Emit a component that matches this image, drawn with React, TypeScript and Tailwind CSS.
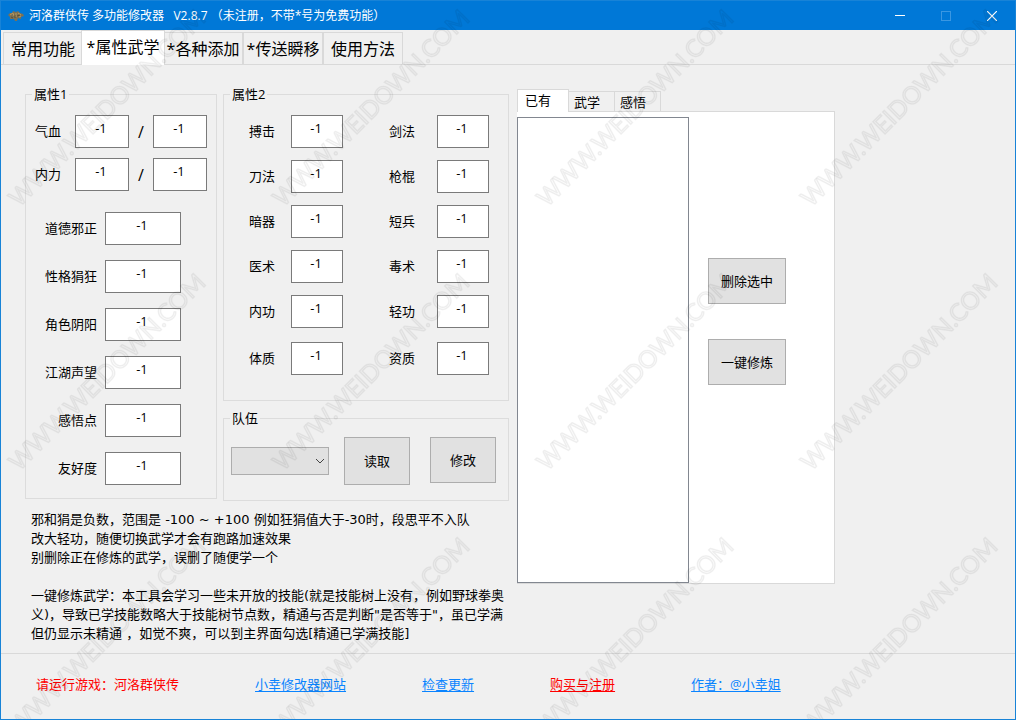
import { useState } from 'react';
import type { ReactNode } from 'react';

const mainTabs = ['常用功能', '*属性武学', '*各种添加', '*传送瞬移', '使用方法'];
const skillTabs = ['已有', '武学', '感悟'];

const traits = ['道德邪正', '性格狷狂', '角色阴阳', '江湖声望', '感悟点', '友好度'];

const skills = [
  ['搏击', '剑法'],
  ['刀法', '枪棍'],
  ['暗器', '短兵'],
  ['医术', '毒术'],
  ['内功', '轻功'],
  ['体质', '资质'],
];

const notes = [
  '邪和狷是负数，范围是 -100 ~ +100 例如狂狷值大于-30时，段思平不入队',
  '改大轻功，随便切换武学才会有跑路加速效果',
  '别删除正在修炼的武学，误删了随便学一个',
  '',
  '一键修炼武学：本工具会学习一些未开放的技能(就是技能树上没有，例如野球拳奥',
  '义)，导致已学技能数略大于技能树节点数，精通与否是判断"是否等于"，虽已学满',
  '但仍显示未精通 ，如觉不爽，可以到主界面勾选[精通已学满技能]',
];

const links = [
  { text: '小幸修改器网站', color: 'text-[#0a84ff]' },
  { text: '检查更新', color: 'text-[#0a84ff]' },
  { text: '购买与注册', color: 'text-[#ff0000]' },
  { text: '作者：@小幸姐', color: 'text-[#0a84ff]' },
];

const AppIcon = () => (
  <svg viewBox="0 0 16 12" className="h-3 w-4" aria-hidden="true">
    <path
      d="M0 5 L2 3 L4 3 L5 1 L8 2 L10 1 L12 3 L15 4 L16 6 L13 7 L13 9 L10 8 L9 11 L7 11 L6 9 L2 9 L2 7 Z"
      fill="#7d7154"
    />
    <path d="M2 5 L5 3 L6 6 M8 3 L8 7 M10 3 L13 5 M11 7 L13 6" stroke="#b99a5f" fill="none" />
    <path d="M3 7 L5 8 M7 5 L7 8 M9 6 L12 5" stroke="#4a3f2a" strokeWidth="0.7" fill="none" />
  </svg>
);

const TitleBar = () => (
  <header className="flex h-[29px] items-center bg-[#0078d7] pl-[7px] text-white">
    <AppIcon />
    <h1 className="ml-[5px] flex-1 whitespace-pre text-xs">
      {'河洛群侠传 多功能修改器   V2.8.7 （未注册，不带*号为免费功能）'}
    </h1>
    <button type="button" aria-label="最小化" className="flex h-full w-[46px] items-center justify-center">
      <svg viewBox="0 0 10 10" className="size-2.5">
        <path d="M0 4.5 H10" stroke="white" />
      </svg>
    </button>
    <button
      type="button"
      aria-label="最大化"
      disabled
      className="flex h-full w-[46px] items-center justify-center"
    >
      <svg viewBox="0 0 10 10" className="size-2.5">
        <rect x="0.5" y="0.5" width="9" height="9" fill="none" stroke="#3a97e2" />
      </svg>
    </button>
    <button type="button" aria-label="关闭" className="flex h-full w-[46px] items-center justify-center">
      <svg viewBox="0 0 10 10" className="size-2.5">
        <path d="M0 0 L10 10 M10 0 L0 10" stroke="white" strokeWidth="1.2" />
      </svg>
    </button>
  </header>
);

const MainTabs = () => {
  const [active, setActive] = useState(1);

  return (
    <nav className="flex h-[35px] items-end border-b border-[#d9d9d9] pl-0.5">
      {mainTabs.map((tab, index) => (
        <button
          key={tab}
          type="button"
          onClick={() => setActive(index)}
          className={`shrink-0 whitespace-nowrap text-base leading-6 ${
            index === active
              ? 'z-10 -mx-0.5 -mb-px h-[35px] w-[84px] border border-b-0 border-[#d9d9d9] bg-white pb-0.5'
              : 'h-8 w-20 border border-b-0 border-[#d9d9d9] bg-[#f0f0f0]'
          }`}
        >
          {tab}
        </button>
      ))}
    </nav>
  );
};

const Group = ({ title, children }: { title: string; children: ReactNode }) => (
  <fieldset className="border border-[#dcdcdc]">
    <legend className="ml-1.5 px-0.5 leading-[18px]">{title}</legend>
    {children}
  </fieldset>
);

const NumberBox = ({ id, label, width }: { id?: string; label?: string; width: string }) => (
  <input
    id={id}
    aria-label={label}
    type="text"
    defaultValue="-1"
    className={`h-[33px] ${width} border border-[#7a7a7a] bg-white pr-0.5 pb-2 text-center outline-none`}
  />
);

const Button = ({ size, children }: { size: string; children: ReactNode }) => (
  <button type="button" className={`border border-[#adadad] bg-[#e1e1e1] ${size}`}>
    {children}
  </button>
);

const PairRow = ({ id, label }: { id: string; label: string }) => (
  <div className="flex items-center">
    <label htmlFor={id} className="w-10">
      {label}
    </label>
    <NumberBox id={id} width="w-[54px]" />
    <span className="w-6 text-center text-base">/</span>
    <NumberBox label={`${label}上限`} width="w-[54px]" />
  </div>
);

const Attributes = () => (
  <Group title="属性1">
    <div className="flex flex-col gap-2.5 pt-3 pr-[9px] pl-[9px]">
      <PairRow id="hp" label="气血" />
      <PairRow id="mp" label="内力" />
    </div>
    <div className="mt-[21px] flex flex-col gap-[15px] pr-[35px] pb-[13px]">
      {traits.map((trait, index) => (
        <div key={trait} className="flex items-center justify-end gap-2">
          <label htmlFor={`trait-${index}`}>{trait}</label>
          <NumberBox id={`trait-${index}`} width="w-[76px]" />
        </div>
      ))}
    </div>
  </Group>
);

const Skills = () => (
  <Group title="属性2">
    <div className="flex flex-col gap-3 pt-3 pr-[19px] pb-[25px] pl-[25px] *:last:mt-0.5">
      {skills.map(([left, right]) => (
        <div key={left} className="flex items-center justify-between">
          <div className="flex items-center gap-4">
            <label htmlFor={left}>{left}</label>
            <NumberBox id={left} width="w-[52px]" />
          </div>
          <div className="flex items-center gap-[22px]">
            <label htmlFor={right}>{right}</label>
            <NumberBox id={right} width="w-[52px]" />
          </div>
        </div>
      ))}
    </div>
  </Group>
);

const Team = () => (
  <Group title="队伍">
    <div className="flex items-center pt-2.5 pr-3 pb-[15px] pl-[7px]">
      <div className="relative">
        <select
          aria-label="队伍"
          className="block h-7 w-[98px] appearance-none border border-[#adadad] bg-[#e1e1e1] outline-none"
        />
        <svg viewBox="0 0 10 6" className="pointer-events-none absolute top-[11px] right-1 h-1.5 w-2.5">
          <path d="M1 1 L5 5 L9 1" fill="none" stroke="#444444" />
        </svg>
      </div>
      <div className="flex flex-1 justify-between pl-[15px]">
        <Button size="h-12 w-[66px]">读取</Button>
        <Button size="h-[46px] w-[66px]">修改</Button>
      </div>
    </div>
  </Group>
);

const SkillPanel = () => {
  const [active, setActive] = useState(0);

  return (
    <section className="mt-1 w-[318px] shrink-0">
      <div className="flex h-[22px] items-end">
        {skillTabs.map((tab, index) => (
          <button
            key={tab}
            type="button"
            onClick={() => setActive(index)}
            className={`border border-b-0 border-[#d9d9d9] text-left leading-5 ${
              index === active
                ? 'z-10 -mb-px h-[23px] w-[52px] bg-white pb-0.5 pl-[7px]'
                : 'h-5 w-[46px] border-l-0 bg-[#f0f0f0] pl-[5px]'
            }`}
          >
            {tab}
          </button>
        ))}
      </div>
      <div className="flex border border-l-0 border-[#d9d9d9] bg-white pt-[5px]">
        <select
          multiple
          aria-label="已有武学"
          className="h-[466px] w-[172px] appearance-none border border-[#828790] bg-white outline-none"
        />
        <div className="flex flex-1 flex-col items-center gap-[35px] pt-[141px] pr-[29px]">
          <Button size="h-[46px] w-[78px]">删除选中</Button>
          <Button size="h-[46px] w-[78px]">一键修炼</Button>
        </div>
      </div>
    </section>
  );
};

const Footer = () => (
  <footer className="flex flex-1 items-center gap-[76px] border-t border-[#d9d9d9] pr-4 pb-1 pl-[35px] whitespace-nowrap">
    <p className="text-[#ff0000]">请运行游戏：河洛群侠传</p>
    {links.map((link) => (
      <a key={link.text} href="#" className={`underline underline-offset-2 ${link.color}`}>
        {link.text}
      </a>
    ))}
  </footer>
);

const Watermark = () => (
  <svg className="pointer-events-none absolute inset-0 z-20 size-full" aria-hidden="true">
    <defs>
      <pattern id="mark" width="264" height="264" patternUnits="userSpaceOnUse">
        <text
          transform="translate(18 207) rotate(-45)"
          className="font-['Lato'] text-[24px]"
          fill="#000000"
          fillOpacity="0.01"
          stroke="#000000"
          strokeOpacity="0.06"
          strokeWidth="1.4"
        >
          WWW.WEIDOWN.COM
        </text>
      </pattern>
    </defs>
    <rect width="100%" height="100%" fill="url(#mark)" />
  </svg>
);

export default function App() {
  return (
    <div className="relative flex min-h-screen flex-col overflow-hidden border border-[#1883d7] bg-[#f0f0f0] font-['Open_Sans','Noto_Sans_CJK_SC',sans-serif] text-[13px] leading-[19px] text-black">
      <TitleBar />
      <MainTabs />
      <main className="flex items-start gap-2 pt-5 pb-2.5 pl-6">
        <div className="shrink-0">
          <div className="flex gap-1.5">
            <div className="w-48">
              <Attributes />
            </div>
            <div className="flex w-[286px] flex-col gap-2">
              <Skills />
              <Team />
            </div>
          </div>
          <div className="mt-[9px] pl-1.5 font-['DejaVu_Sans','Noto_Sans_CJK_SC',sans-serif] whitespace-nowrap">
            {notes.map((line, index) => (
              <p key={index} className="h-[19px]">
                {line}
              </p>
            ))}
          </div>
        </div>
        <SkillPanel />
      </main>
      <Footer />
      <Watermark />
    </div>
  );
}
